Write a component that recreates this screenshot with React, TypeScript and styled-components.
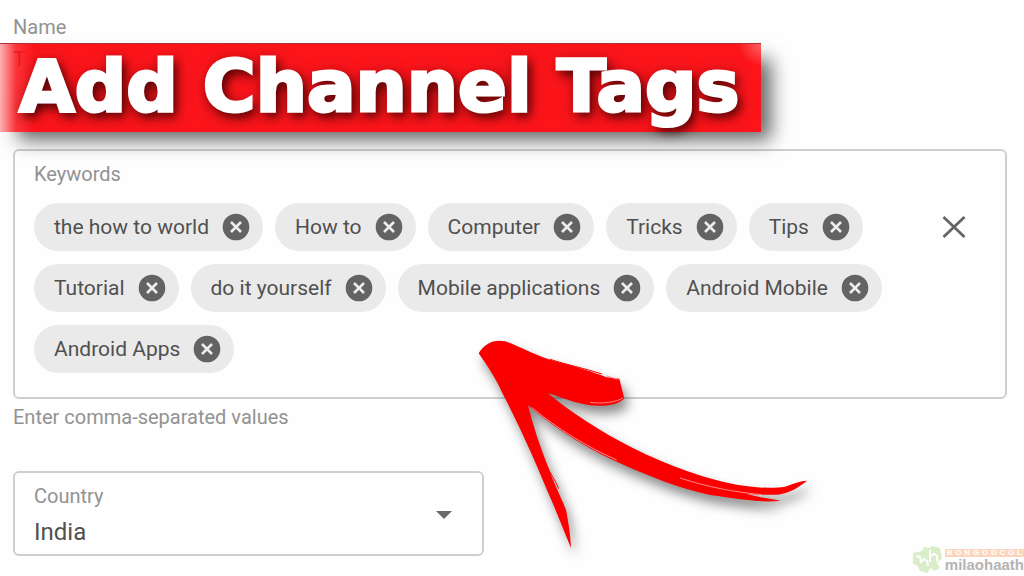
import React, { useState } from "react";
import styled, { createGlobalStyle } from "styled-components";

const GlobalStyle = createGlobalStyle`
  * { box-sizing: border-box; }
  body {
    margin: 0;
    background: #fefefe;
    font-family: Roboto, "Liberation Sans", sans-serif;
    color: #505050;
    overflow: hidden;
  }
  button, input, select { font: inherit; color: inherit; }
`;

const Page = styled.main`
  position: relative;
  min-height: 100vh;
  padding: 15px 17px 20px 13px;
`;

const NameField = styled.div`
  display: flex;
  flex-direction: column;
  height: 134px;
`;

const Label = styled.label`
  font-size: 20px;
  line-height: 24px;
  color: #929292;
`;

const NameInput = styled.input`
  border: 0;
  padding: 0;
  margin-top: 8px;
  height: 24px;
  font-size: 21px;
  background: transparent;
  outline: none;
`;

const KeywordBox = styled.section`
  height: 250px;
  padding: 11px 19px;
  border: 2px solid #cfcfcf;
  border-radius: 6px;
`;

const KeywordRow = styled.div`
  display: flex;
  justify-content: space-between;
  align-items: flex-start;
  padding-top: 17px;
`;

const ChipList = styled.ul`
  display: flex;
  flex-wrap: wrap;
  gap: 13px 12px;
  flex: 0 1 870px;
  margin: 0;
  padding: 0;
  list-style: none;
`;

const Chip = styled.li`
  display: flex;
  align-items: center;
  gap: 13px;
  height: 48px;
  padding: 0 13px 0 20px;
  border-radius: 24px;
  background: #eaeaea;
  font-size: 21px;
  line-height: 24px;
  white-space: nowrap;
`;

const IconButton = styled.button`
  display: flex;
  padding: 0;
  border: 0;
  background: none;
  cursor: pointer;
`;

const ClearButton = styled(IconButton)`
  margin: 12px 20px 0 0;
`;

const Hint = styled.p`
  margin: 6px 0 0;
  font-size: 20px;
  line-height: 24px;
  color: #929292;
`;

const CountryBox = styled.div`
  position: relative;
  display: flex;
  flex-direction: column;
  width: 47.4%;
  height: 85px;
  margin-top: 42px;
  padding: 11px 19px;
  border: 2px solid #cfcfcf;
  border-radius: 6px;
`;

const CountrySelect = styled.select`
  appearance: none;
  margin-top: 8px;
  padding: 0;
  border: 0;
  outline: none;
  background: transparent;
  font-size: 24px;
  line-height: 32px;
`;

const Caret = styled.svg`
  position: absolute;
  right: 30px;
  top: 37px;
  pointer-events: none;
`;

const Banner = styled.h1`
  position: absolute;
  left: 0;
  top: 43px;
  margin: 0;
  padding: 0 22px 0 19px;
  height: 89px;
  line-height: 84px;
  font-family: "DejaVu Sans", sans-serif;
  font-size: 72px;
  font-weight: 700;
  white-space: nowrap;
  color: #fff;
  -webkit-text-stroke: 3px #fff;
  background:
    radial-gradient(circle at 100% 0, rgba(255, 150, 150, 0.6), transparent 22px),
    linear-gradient(90deg, #fb151b55 0, #fb151bdd 16px, #fb151b 34px);
  border-top: 1px solid #b03038;
  box-shadow: 14px 12px 18px -4px rgba(0, 0, 0, 0.6);
  text-shadow: 4px 5px 8px rgba(50, 0, 0, 0.7), 2px 4px 16px rgba(50, 0, 0, 0.6);
`;

const Arrow = styled.svg`
  position: absolute;
  left: 460px;
  top: 320px;
  overflow: visible;
  pointer-events: none;
  filter: drop-shadow(4px 8px 6px rgba(0, 0, 0, 0.45));
`;

const Watermark = styled.aside`
  position: absolute;
  right: 0;
  bottom: 2px;
  display: flex;
  align-items: center;
  gap: 2px;
`;

const WatermarkText = styled.div`
  display: flex;
  flex-direction: column;
  font-family: "Liberation Sans", sans-serif;
  font-weight: 700;
`;

const WatermarkTop = styled.span`
  display: flex;
  justify-content: space-between;
  padding: 0 2px;
  background: #fbd6bd;
  color: #fff;
  font-size: 8px;
  line-height: 8px;
`;

const WatermarkName = styled.span`
  font-size: 15px;
  line-height: 15px;
  color: #b4b4b4;
`;

const KEYWORDS = [
  "the how to world", "How to", "Computer", "Tricks", "Tips",
  "Tutorial", "do it yourself", "Mobile applications", "Android Mobile",
  "Android Apps",
];

const RemoveIcon = () => (
  <svg width="28" height="28" viewBox="0 0 28 28" aria-hidden="true">
    <circle cx="14" cy="14" r="13.300" fill="#636363" />
    <path d="M9 9l10 10m0-10l-10 10" stroke="#ededed" strokeWidth="2.600" />
  </svg>
);

export default function App() {
  const [keywords, setKeywords] = useState(KEYWORDS);
  const [name, setName] = useState("T");
  return (
    <Page>
      <GlobalStyle />
      <NameField>
        <Label htmlFor="name">Name</Label>
        <NameInput id="name" value={name} onChange={(e) => setName(e.target.value)} />
      </NameField>

      <KeywordBox>
        <Label as="div">Keywords</Label>
        <KeywordRow>
          <ChipList>
            {keywords.map((word) => (
              <Chip key={word}>
                {word}
                <IconButton
                  aria-label={`Remove ${word}`}
                  onClick={() => setKeywords(keywords.filter((k) => k !== word))}
                >
                  <RemoveIcon />
                </IconButton>
              </Chip>
            ))}
          </ChipList>
          <ClearButton aria-label="Clear all" onClick={() => setKeywords([])}>
            <svg width="24" height="24" viewBox="0 0 24 24" aria-hidden="true">
              <path d="M1.500 2l21 20m0-20l-21 20" stroke="#666" strokeWidth="2.800" />
            </svg>
          </ClearButton>
        </KeywordRow>
      </KeywordBox>
      <Hint>Enter comma-separated values</Hint>

      <CountryBox>
        <Label htmlFor="country">Country</Label>
        <CountrySelect id="country" defaultValue="India">
          <option>India</option>
        </CountrySelect>
        <Caret width="16" height="9" viewBox="0 0 16 9" aria-hidden="true">
          <path d="M0 1h16l-8 8z" fill="#6b6b6b" />
        </Caret>
      </CountryBox>

      <Banner>Add Channel Tags</Banner>

      <Arrow width="370" height="240" viewBox="0 0 1110 720" aria-hidden="true">
        <path
          fill="#fb0000"
          d="M56 100C75 70 100 58 136 64C185 82 230 108 280 122C340 138 400 155 440 172L478 176L493 236C470 255 435 260 390 256C345 250 305 232 264 220C330 275 420 335 520 385C620 435 740 478 830 494C890 504 940 506 975 500C1000 492 1015 484 1041 482C1015 503 990 518 955 524L900 524L860 522C895 532 930 536 962 542C900 550 830 535 750 525C660 505 570 470 490 434C390 392 280 322 204 256C220 320 240 380 264 440C285 500 310 545 318 570C326 610 332 650 333 684C310 630 290 575 265 520C225 420 170 300 125 215C105 170 80 135 56 100Z"
        />
        <path
          fill="none"
          stroke="#fb0000"
          strokeWidth="3"
          d="M270 118C320 134 370 144 426 162M262 440C270 460 286 480 296 506"
        />
        <path
          fill="none"
          stroke="#ff8a8a"
          strokeWidth="3"
          d="M215 262C290 325 380 380 470 420M660 474C740 500 820 516 905 524M390 247C430 252 465 247 490 234M440 168L472 178"
        />
      </Arrow>

      <Watermark>
        <svg width="31" height="28" viewBox="0 0 31 28" aria-hidden="true">
          <path
            fill="#d9edc9"
            d="M1 7l9-2 2-4 6 1 2-2 8 2 2 10-5 5 3 5-6 3-3-3-4 5-7-2-3-6-4-1z"
          />
          <path
            fill="none"
            stroke="#fff"
            strokeWidth="2"
            d="M4 10l4 1 1 5 3-3 3 2 1 5M18 4v12m0-6l4-2 3 2v5"
          />
        </svg>
        <WatermarkText>
          <WatermarkTop>
            {"BONGODCOL".split("").map((letter, i) => <span key={i}>{letter}</span>)}
          </WatermarkTop>
          <WatermarkName>milaohaath</WatermarkName>
        </WatermarkText>
      </Watermark>
    </Page>
  );
}
